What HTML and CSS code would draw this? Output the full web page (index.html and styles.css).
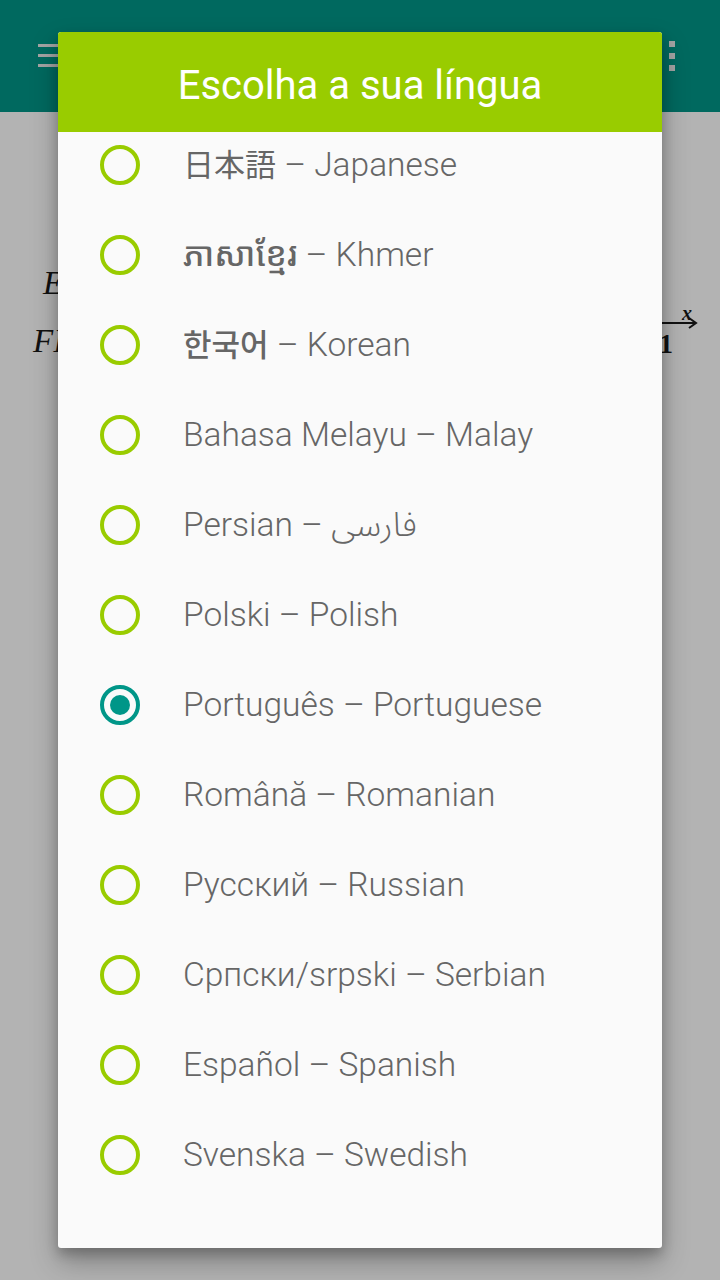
FILE: index.html
```html
<!DOCTYPE html>
<html lang="pt">
<head>
<meta charset="utf-8">
<title>Escolha a sua língua</title>
<link rel="stylesheet" href="styles.css">
</head>
<body>
<div class="screen">
  <header class="appbar">
    <span class="menu-icon"><i></i><i></i><i></i></span>
    <span class="more-icon"><i></i><i></i><i></i></span>
  </header>
  <main class="content">
    <div class="math-line"><span class="math">E</span></div>
    <div class="math-line second">
      <span class="math">FI</span>
      <span class="vec"><span class="vec-x">x</span><span class="vec-base">A1</span><svg class="arrow" width="40" height="12" viewBox="0 0 40 12"><path d="M0 6 H37 M31 1 L38 6 L31 11" fill="none" stroke="#111" stroke-width="2"/></svg></span>
    </div>
  </main>

  <div class="dialog">
    <div class="dialog-title">Escolha a sua língua</div>
    <div class="dialog-body">
      <ul class="options">
        <li class="option"><span class="radio"></span><span class="label"><span class="native cjk">日本語</span> – Japanese</span></li>
        <li class="option"><span class="radio"></span><span class="label"><span class="native bold">ភាសាខ្មែរ</span> – Khmer</span></li>
        <li class="option"><span class="radio"></span><span class="label"><span class="native cjk bold">한국어</span> – Korean</span></li>
        <li class="option"><span class="radio"></span><span class="label">Bahasa Melayu – Malay</span></li>
        <li class="option"><span class="radio"></span><span class="label">Persian – <span class="arabic" dir="rtl">فارسی</span></span></li>
        <li class="option"><span class="radio"></span><span class="label">Polski – Polish</span></li>
        <li class="option selected"><span class="radio"></span><span class="label">Português – Portuguese</span></li>
        <li class="option"><span class="radio"></span><span class="label">Română – Romanian</span></li>
        <li class="option"><span class="radio"></span><span class="label">Русский – Russian</span></li>
        <li class="option"><span class="radio"></span><span class="label">Српски/srpski – Serbian</span></li>
        <li class="option"><span class="radio"></span><span class="label">Español – Spanish</span></li>
        <li class="option"><span class="radio"></span><span class="label">Svenska – Swedish</span></li>
      </ul>
    </div>
  </div>
</div>
</body>
</html>
```

FILE: styles.css
```css
* { box-sizing: border-box; }
html, body {
  margin: 0;
  padding: 0;
  width: 720px;
  height: 1280px;
  overflow: hidden;
  background: #b3b3b3;
}
.screen {
  position: relative;
  width: 720px;
  height: 1280px;
  background: #b3b3b3;
  font-family: Roboto, "Noto Sans", "Noto Sans Khmer", "Noto Sans CJK JP", "Noto Sans CJK KR", sans-serif;
}
.appbar {
  height: 112px;
  background: #00695f;
  display: flex;
  justify-content: space-between;
  align-items: flex-start;
  padding: 0 45px 0 38px;
}
.menu-icon {
  margin-top: 44px;
  width: 20px;
  display: flex;
  flex-direction: column;
  gap: 7px;
}
.menu-icon i {
  display: block;
  height: 3px;
  background: #a3a3a3;
}
.more-icon {
  margin-top: 41px;
  width: 6px;
  display: flex;
  flex-direction: column;
  gap: 6px;
}
.more-icon i {
  display: block;
  width: 6px;
  height: 6px;
  background: #a3a3a3;
}
.content {
  padding: 132px 22px 0 33px;
  font-family: "Liberation Serif", "DejaVu Serif", serif;
  font-style: italic;
  font-size: 33px;
  color: #111;
}
.math-line {
  height: 58px;
  display: flex;
  align-items: flex-end;
  padding-left: 10px;
}
.math-line.second {
  justify-content: space-between;
  padding-left: 0;
}
.vec {
  position: relative;
  display: flex;
  align-items: flex-end;
  font-style: normal;
  font-weight: 700;
  font-size: 28px;
}
.vec-base { margin-right: 25px; }
.vec-x {
  position: absolute;
  right: 6px;
  top: -26px;
  font-style: italic;
  font-weight: 700;
  font-size: 20px;
}
.arrow {
  position: absolute;
  right: 0;
  top: -11px;
}
.dialog {
  position: absolute;
  left: 58px;
  top: 32px;
  width: 604px;
  height: 1216px;
  background: #fafafa;
  border-radius: 3px;
  overflow: hidden;
  display: flex;
  flex-direction: column;
  box-shadow: 0 14px 28px rgba(0,0,0,0.28), 0 6px 12px rgba(0,0,0,0.2);
}
.dialog-title {
  height: 100px;
  flex: none;
  background: #99cc00;
  color: #ffffff;
  font-size: 40px;
  font-weight: 400;
  display: flex;
  align-items: center;
  justify-content: center;
  padding-top: 6px;
}
.dialog-body {
  flex: 1;
  overflow: hidden;
}
.options {
  list-style: none;
  margin: -12px 0 0 0;
  padding: 0;
}
.option {
  height: 90px;
  display: flex;
  align-items: center;
  padding-left: 42px;
}
.radio {
  width: 40px;
  height: 40px;
  border-radius: 50%;
  border: 4px solid #99cc00;
  flex: none;
  display: flex;
  align-items: center;
  justify-content: center;
  margin-right: 43px;
}
.option.selected .radio {
  border-color: #009688;
}
.option.selected .radio::after {
  content: "";
  width: 20px;
  height: 20px;
  border-radius: 50%;
  background: #009688;
}
.label {
  font-size: 33.5px;
  font-weight: 300;
  color: #666666;
  white-space: nowrap;
  line-height: 40px;
}
.native { font-weight: 400; }
.native.cjk { font-size: 31px; }
.native.bold { font-weight: 500; }
.arabic { font-weight: 300; font-family: "Noto Sans Arabic", "Noto Sans", "DejaVu Sans", sans-serif; }
```
